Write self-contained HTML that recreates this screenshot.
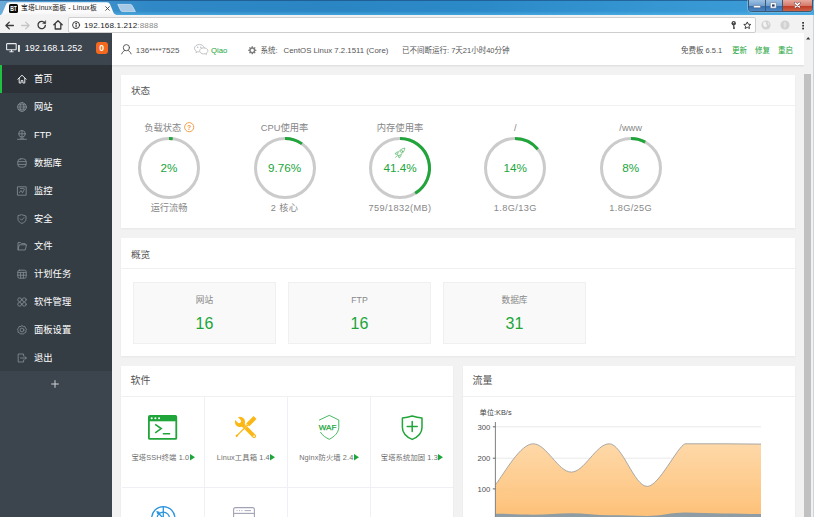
<!DOCTYPE html>
<html lang="zh-CN">
<head>
<meta charset="utf-8">
<title>宝塔Linux面板 - Linux板</title>
<style>
*{box-sizing:border-box;margin:0;padding:0}
html,body{width:814px;height:517px;overflow:hidden;background:#f2f2f2}
body{font-family:"Liberation Sans","Noto Sans CJK SC",sans-serif;font-size:9px;color:#666;position:relative}
.abs{position:absolute}
svg{display:block;overflow:visible}
/* ---------- browser chrome ---------- */
#titlebar{left:0;top:0;width:814px;height:15px;background:linear-gradient(90deg,#6dabd9 0,#4e9bd2 5%,#3089c6 18%,#2b85c3 40%,#2c8ac8 60%,#3596d2 80%,#3d9dd8 100%)}
#titleglow{left:0;top:10.500px;width:814px;height:4.500px;background:linear-gradient(rgba(90,190,240,0),rgba(90,190,240,.55))}
#tab{left:0;top:1.600px;width:121px;height:13.400px}
#tabtxt{left:21px;top:2.700px;letter-spacing:.190px;font-size:6.800px;color:#222;white-space:nowrap;line-height:10px}
#favicon{left:9.200px;top:3.700px;width:9.200px;height:9.200px;background:#0c0c0c;border-radius:1.600px;color:#fff;font-size:6.600px;font-weight:bold;line-height:9.400px;text-align:center;overflow:hidden}
#favicon b{display:block;transform:scaleX(.760);transform-origin:50% 50%;margin:0 -2px}
#toolbar{left:0;top:14.8px;width:814px;height:18.2px;background:#f2f2f2}
#urlbox{left:68px;top:17px;width:688px;height:15.5px;background:#fff;border:1px solid #cfcfcf;border-radius:2px}
#url{left:84px;top:19.500px;letter-spacing:.12px;font-size:8.100px;line-height:12px;color:#222;white-space:nowrap}
#url span{color:#8a8a8a}
.ti{position:absolute;fill:none;stroke:#3a3a3a;stroke-width:1.3;stroke-linecap:round;stroke-linejoin:round}
/* window buttons */
#winbtns{left:747.500px;top:-1px;width:65px;height:12.600px;border:1px solid #3e5670;border-radius:0 0 3.5px 3.5px;overflow:hidden;box-shadow:0 0 0 .6px rgba(255,255,255,.45)}
#winbtns div{position:absolute;top:0;height:11.600px}
#winbtns .a{left:0;width:17px;background:linear-gradient(#9dc0e2 0,#71a0d0 48%,#366eae 52%,#4f8cc8 100%);border-right:1px solid #3e5670}
#winbtns .b{left:17px;width:17px;background:linear-gradient(#9dc0e2 0,#71a0d0 48%,#366eae 52%,#4f8cc8 100%);border-right:1px solid #3e5670}
#winbtns .c{left:34px;width:30px;background:linear-gradient(#e7aa9e 0,#d5796a 48%,#c13b26 52%,#cf6a4c 100%)}
/* ---------- page ---------- */
#side{left:0;top:33px;width:111.600px;height:484px;background:#3c444d}
#sidemenu{left:0;top:65px;width:111.600px;height:306px;background:#353d44}
.mi{position:absolute;left:0;width:111.600px;height:28px;color:#fff;font-size:9.3px;line-height:28px;padding-left:34px;white-space:nowrap}
.mi.on{background:#2c3138;height:27.5px}
.mi.on:before{content:"";position:absolute;left:0;top:0;width:2px;height:100%;background:#22c040}
.mi svg{position:absolute;left:17px;top:9px;width:10px;height:10px;stroke:#838c94;fill:none;stroke-width:.85;stroke-linejoin:round;stroke-linecap:round}
.mi.on svg{stroke:#e4e6e8;stroke-width:1}
#topbar{left:111.600px;top:33px;width:692.400px;height:32px;background:#fff;box-shadow:0 1px 2px rgba(0,0,0,.10)}
#topbar span{position:absolute;top:.500px;line-height:33px;font-size:7.5px;color:#555;white-space:nowrap}
.g{color:#20a53a !important}
.card{position:absolute;background:#fff;box-shadow:0 1px 2px rgba(0,0,0,.05)}
.ct{position:absolute;left:10px;top:.5px;line-height:31px;font-size:9.6px;color:#555}
.cl{position:absolute;left:0;right:0;top:30px;height:1px;background:#f0f0f0}
/* gauges */
.gz{position:absolute;top:46.500px;width:120px;height:100px;text-align:center}
.gz .t{position:absolute;left:0;right:0;top:.8px;font-size:9.3px;line-height:12px;color:#878787;white-space:nowrap}
.gz .b{position:absolute;left:0;right:0;top:81px;font-size:9.2px;line-height:12px;color:#878787;white-space:nowrap}
.gz>svg{position:absolute;left:28px;top:14.600px;width:64px;height:64px}
.gz .v{position:absolute;left:0;right:0;top:39.600px;font-size:11.700px;line-height:14px;color:#20a53a}
/* overview */
.ov{position:absolute;top:44px;width:143px;height:62px;background:#f9f9f9;border:1px solid #f0f0f0;text-align:center}
.ov .n{position:absolute;left:0;right:0;top:11px;font-size:8.7px;line-height:12px;color:#888}
.ov .k{position:absolute;left:0;right:0;top:31px;font-size:16px;line-height:20px;color:#20a53a}
/* software */
.sw{position:absolute;top:31px;width:83px;height:91px;border-right:1px solid #efeff6;border-bottom:1px solid #efeff6}
.sw .l{position:absolute;left:0;right:0;top:56px;text-align:center;font-size:7.300px;line-height:10px;color:#707070;white-space:nowrap;letter-spacing:.120px}
.sw .l .tri{position:static;display:inline-block;width:5px;height:6.400px;vertical-align:-1.100px;margin-left:.400px}
.ct2{top:-.800px !important;left:9.400px !important;font-size:10px !important}
.sw svg{position:absolute;margin-top:.400px}
/* scrollbar */
#sbtrack{left:804px;top:33px;width:8.6px;height:484px;background:#f1f1f1}
#sbthumb{left:804px;top:73.9px;width:7.3px;height:444px;background:#c1c1c1}
#re1{left:812.6px;top:14.6px;width:1.4px;height:503px;background:#cbd5de}
#re2{display:none}
</style>
</head>
<body>
<!-- browser chrome -->
<div id="titlebar" class="abs"></div>
<div id="titleglow" class="abs"></div>
<div class="abs" style="left:0;top:0;width:814px;height:.700px;background:rgba(25,70,120,.600)"></div>
<svg id="tab" class="abs" viewBox="0 0 120 13"><defs><linearGradient id="tg" x1="0" y1="0" x2="0" y2="1"><stop offset="0" stop-color="#fdfdfd"/><stop offset=".8" stop-color="#fafafa"/><stop offset="1" stop-color="#f2f2f2"/></linearGradient></defs><path d="M0 13C1.200 12.600 2 11.800 2.600 10.200L6 2.200C6.600 .700 7.500 0 9 0H106C107.600 0 108.500 .800 109.200 2.400L112.400 10C113.400 12.200 115 13 120 13Z" fill="url(#tg)"/></svg>
<svg class="abs" style="left:117px;top:4.2px;width:19px;height:8px" viewBox="0 0 19 8"><path d="M.8.4H13.2C14.2.4 14.8.9 15.3 1.9L18.4 7.6H5.6C4.6 7.6 4 7.1 3.5 6.1Z" fill="#a7c9e6" stroke="#dcebf7" stroke-width=".7"/></svg>
<div id="favicon" class="abs"><b>BT</b></div>
<div id="tabtxt" class="abs">宝塔Linux面板 - Linux板</div>
<svg class="abs" style="left:104.6px;top:6px;width:5px;height:5px" viewBox="0 0 5 5"><path d="M.4.4 4.6 4.6M4.6.4.4 4.6" stroke="#444" stroke-width=".9" fill="none"/></svg>
<div id="winbtns" class="abs"><div class="a"></div><div class="b"></div><div class="c"></div></div>
<svg class="abs" style="left:747px;top:0;width:66px;height:11px" viewBox="0 0 66 11">
<rect x="6.6" y="5.4" width="7" height="2.4" rx=".8" fill="#fff" stroke="#4a5d75" stroke-width=".5"/>
<rect x="23.3" y="2.6" width="6" height="5.6" rx=".8" fill="#fff" stroke="#4a5d75" stroke-width=".5"/><rect x="25" y="4.4" width="2.6" height="2.2" fill="#27406a"/>
<path d="M48.300 3.200 52.400 7M52.400 3.200 48.300 7" stroke="#6a3a36" stroke-width="2.500" stroke-linecap="round"/><path d="M48.300 3.200 52.400 7M52.400 3.200 48.300 7" stroke="#fff" stroke-width="1.600" stroke-linecap="round"/>
</svg>
<div id="toolbar" class="abs"></div>
<div id="urlbox" class="abs"></div>
<div id="url" class="abs">192.168.1.212<span>:8888</span></div>
<!-- nav icons -->
<svg class="ti" style="left:5px;top:20.5px;width:9px;height:9px" viewBox="0 0 9 9"><path d="M8.4 4.5H1M4.3 1.1.9 4.5 4.3 7.9"/></svg>
<svg class="ti" style="left:21px;top:20.5px;width:9px;height:9px;stroke:#c6c6c6" viewBox="0 0 9 9"><path d="M.6 4.5H8M4.7 1.1 8.1 4.5 4.7 7.9"/></svg>
<svg class="ti" style="left:37px;top:20.3px;width:9.4px;height:9.4px" viewBox="0 0 9.4 9.4"><path d="M7.9 3.1A3.7 3.7 0 1 0 8.4 5.4"/><path d="M8.7.8V3.6H5.9Z" fill="#3a3a3a" stroke-width=".4"/></svg>
<svg class="ti" style="left:53px;top:20.3px;width:10px;height:9.6px" viewBox="0 0 10 9.6"><path d="M.8 4.8 5 .8 9.2 4.8M2.2 4V9H7.8V4"/></svg>
<svg class="ti" style="left:72px;top:21px;width:8.2px;height:8.2px;stroke-width:1" viewBox="0 0 8.2 8.2"><circle cx="4.1" cy="4.1" r="3.5"/><path d="M4.1 3.8V6" stroke-width="1.1"/><circle cx="4.1" cy="2.4" r=".35" fill="#3a3a3a"/></svg>
<!-- right toolbar icons -->
<svg class="abs" style="left:730.5px;top:20.8px;width:5.4px;height:8.4px" viewBox="0 0 5.4 8.4"><circle cx="2.7" cy="2.3" r="2.2" fill="#444"/><path d="M2.7 4V8M2.7 6.2H4M2.7 7.6H3.8" stroke="#444" stroke-width="1" fill="none"/><circle cx="2.7" cy="1.7" r=".6" fill="#fff"/></svg>
<svg class="abs" style="left:743.4px;top:20.6px;width:8.6px;height:8.6px" viewBox="0 0 24 24"><path d="M12 2.6 14.9 9 21.8 9.7 16.6 14.3 18.1 21.1 12 17.6 5.9 21.1 7.4 14.3 2.2 9.7 9.1 9Z" fill="none" stroke="#333" stroke-width="2.6" stroke-linejoin="round"/></svg>
<svg class="abs" style="left:761px;top:20px;width:10px;height:10px" viewBox="0 0 10 10"><circle cx="5" cy="5" r="4.600" fill="#d4d4d4"/><path d="M2.4 2.2C3.8 1.4 5.4 2 5 3.4 4.6 4.6 6.4 4.4 6 5.8 5.6 7 4 7.6 3.2 6.6 2.4 5.6 1.6 4 2.4 2.2Z" fill="#f4f4f4"/><path d="M6.6 2C7.8 2.6 8.4 3.8 8.2 5L7 4.2Z" fill="#ededed"/></svg>
<svg class="abs" style="left:780px;top:20px;width:10px;height:10px" viewBox="0 0 10 10"><circle cx="5" cy="5" r="4.600" fill="#d2d2d2"/><path d="M5 1.6C6.2 2.8 6.8 4.4 6 6.2 5.6 7.2 4.8 7.8 4 8 4.6 6.6 3.6 5.6 3.6 4.2 3.6 3 4.2 2.2 5 1.6Z" fill="#e2e2e2"/></svg>
<svg class="abs" style="left:801.600px;top:22px;width:2.200px;height:7.400px" viewBox="0 0 2.2 7.4"><rect x=".2" y="0" width="1.8" height="1.7" fill="#333"/><rect x=".2" y="2.85" width="1.8" height="1.7" fill="#333"/><rect x=".2" y="5.7" width="1.8" height="1.7" fill="#333"/></svg>
<div id="re1" class="abs"></div><div id="re2" class="abs"></div>

<!-- sidebar -->
<div id="side" class="abs"></div>
<svg class="abs" style="left:6px;top:43.4px;width:14.4px;height:9.4px" viewBox="0 0 14.4 9.4" fill="none" stroke="#e9ecef" stroke-width="1.1"><rect x=".6" y=".6" width="9.6" height="6.2" rx=".6"/><path d="M3.4 8.8H7.6M5.5 6.8V8.6" /><rect x="12" y="2" width="1.9" height="6.8" fill="#e9ecef" stroke="none"/></svg>
<span class="abs" style="left:24.800px;top:33px;line-height:30px;font-size:9px;color:#fff;white-space:nowrap">192.168.1.252</span>
<span class="abs" style="left:95.5px;top:42px;width:12.4px;height:12px;border-radius:3px;background:#f5691f;color:#fff;font-size:8.6px;font-weight:bold;line-height:12.4px;text-align:center">0</span>
<div id="sidemenu" class="abs">
  <div class="mi on" style="top:0.00px"><svg viewBox="0 0 10 10"><path d="M.8 5.2 5 1.2 9.2 5.2M2.2 4.4V9H4.1V6.6H5.9V9H7.8V4.4"/></svg>首页</div>
  <div class="mi" style="top:27.90px"><svg viewBox="0 0 10 10"><circle cx="5" cy="5" r="4.4"/><ellipse cx="5" cy="5" rx="2" ry="4.4"/><path d="M.6 5H9.4M1.3 2.8H8.7M1.3 7.2H8.7"/></svg>网站</div>
  <div class="mi" style="top:55.80px"><svg viewBox="0 0 10 10"><circle cx="5" cy="3.8" r="3.3"/><path d="M1.7 3.8H8.3M5 .5V7.1M.5 9.3H9.5M3.3 8.2H6.7"/></svg>FTP</div>
  <div class="mi" style="top:83.70px"><svg viewBox="0 0 10 10"><rect x=".8" y=".8" width="8.4" height="8.4" rx="3"/><path d="M1 3.6H9M1 6.4H9"/></svg>数据库</div>
  <div class="mi" style="top:111.60px"><svg viewBox="0 0 10 10"><rect x=".8" y=".8" width="8.4" height="8.4"/><path d="M2.5 6.5 4 4.5 5.5 6.8 7.5 3M3.5 2.4H6.5"/></svg>监控</div>
  <div class="mi" style="top:139.50px"><svg viewBox="0 0 10 10"><path d="M5 .8 9 2V5.2C9 7.2 7.2 8.6 5 9.4 2.8 8.6 1 7.2 1 5.2V2Z"/><path d="M3.2 4.8 4.6 6.2 7 3.6"/></svg>安全</div>
  <div class="mi" style="top:167.40px"><svg viewBox="0 0 10 10"><path d="M1 8.6V1.6H3.6L4.5 2.6H8.2V3.8M1 8.6 2.3 3.8H9.6L8.3 8.6Z"/></svg>文件</div>
  <div class="mi" style="top:195.30px"><svg viewBox="0 0 10 10"><rect x=".8" y="1.2" width="8.4" height="8" rx="1.6"/><path d="M.8 3.4H9.2M3.6 3.4V9M6.4 3.4V9M.8 6.2H9.2"/></svg>计划任务</div>
  <div class="mi" style="top:223.20px"><svg viewBox="0 0 10 10"><circle cx="2.7" cy="2.7" r="1.9"/><circle cx="7.3" cy="2.7" r="1.9"/><circle cx="2.7" cy="7.3" r="1.9"/><circle cx="7.3" cy="7.3" r="1.9"/></svg>软件管理</div>
  <div class="mi" style="top:251.10px"><svg viewBox="0 0 10 10"><path d="M5 .6 6.3 1.5 7.9 1.5 8.4 3 9.5 4.2 8.9 5.6 9 7.2 7.5 7.8 6.5 9.1 5 8.7 3.5 9.1 2.5 7.8 1 7.2 1.1 5.6.5 4.2 1.6 3 2.1 1.5 3.7 1.5Z"/><circle cx="5" cy="5" r="1.9"/></svg>面板设置</div>
  <div class="mi" style="top:279.00px"><svg viewBox="0 0 10 10"><path d="M6.6 3V1H1.2V9H6.6V7M3.6 5H9.3M7.8 3.6 9.3 5 7.8 6.4"/></svg>退出</div>
</div>
<svg class="abs" style="left:50.6px;top:380px;width:8px;height:8px" viewBox="0 0 8 8"><path d="M4 .2V7.8M.2 4H7.8" stroke="#cfd3d6" stroke-width="1" fill="none"/></svg>

<!-- top bar -->
<div id="topbar" class="abs">
  <svg class="abs" style="left:9.8px;top:11.4px;width:10.8px;height:10.4px" viewBox="0 0 10.8 10.4" fill="none" stroke="#555" stroke-width=".95" stroke-linecap="round"><circle cx="5.4" cy="3.7" r="3.1"/><path d="M.7 9.9C1.4 8 2.6 7 3.6 6.5M10.1 9.9C9.4 8 8.2 7 7.2 6.5"/></svg>
  <span style="left:24.2px;font-size:8px">136****7525</span>
  <svg class="abs" style="left:82.4px;top:11.2px;width:14.6px;height:10.4px" viewBox="0 0 14.6 10.4" fill="none" stroke="#aeb4b8" stroke-width=".8"><path d="M5.4.5C2.7.5.5 2.2.5 4.3.5 5.5 1.2 6.5 2.3 7.2L1.9 8.6 3.5 7.8C4 7.9 4.5 8 5 8"/><path d="M5.4.5C7.9.5 10 2 10.3 3.9"/><path d="M9.7 3.9C7.4 3.9 5.6 5.2 5.6 6.9 5.6 8.6 7.4 9.9 9.7 9.9 10.2 9.9 10.6 9.8 11 9.7L12.5 10.4 12.2 9.2C13.2 8.7 13.9 7.8 13.9 6.9 13.9 5.2 12 3.9 9.7 3.9Z"/><circle cx="3.8" cy="3.2" r=".35" fill="#aeb4b8"/><circle cx="6.9" cy="3.2" r=".35" fill="#aeb4b8"/></svg>
  <span style="left:99.4px;font-size:7.700px" class="g">Qiao</span>
  <svg class="abs" style="left:136.800px;top:12.500px;width:8.600px;height:8.600px" viewBox="0 0 24 24"><path fill="#7d7d7d" fill-rule="evenodd" d="M10.3 1.5H13.7L14.3 4.6 16.2 5.4 18.8 3.6 21.2 6 19.4 8.6 20.2 10.5 23.3 11.1V14.5L20.2 15.1 19.4 17 21.2 19.6 18.8 22 16.2 20.2 14.3 21 13.7 24.1H10.3L9.7 21 7.8 20.2 5.2 22 2.8 19.6 4.6 17 3.8 15.1.7 14.5V11.1L3.8 10.5 4.6 8.6 2.8 6 5.2 3.6 7.8 5.4 9.7 4.6ZM12 8.3A4.5 4.5 0 1 0 12 17.3 4.5 4.5 0 1 0 12 8.3Z" transform="translate(0,-.8)"/></svg>
  <span style="left:149.0px">系统:</span>
  <span style="left:172.0px;font-size:7.800px">CentOS Linux 7.2.1511 (Core)</span>
  <span style="left:290.4px">已不间断运行: 7天21小时40分钟</span>
  <span style="left:569.4px">免费板 6.5.1</span>
  <span style="left:620.4px" class="g">更新</span>
  <span style="left:643.4px" class="g">修复</span>
  <span style="left:666.4px" class="g">重启</span>
</div>

<!-- status card -->
<div class="card" style="left:121px;top:74.500px;width:673.700px;height:153.900px">
  <div class="ct">状态</div><div class="cl" style="top:30.5px"></div>
  <div class="gz" style="left:-12px"><div class="t" style="left:-12.5px">负载状态</div><svg viewBox="0 0 64 64"><circle cx="32" cy="32" r="29.5" fill="none" stroke="#cbcbcb" stroke-width="3"/><path d="M32 2.5 A29.5 29.5 0 0 1 35.70 2.73" fill="none" stroke="#20a53a" stroke-width="3"/></svg><svg class="abs" style="left:75px;top:1.300px;width:10.400px;height:10.400px" viewBox="0 0 10 10"><circle cx="5" cy="5" r="4.4" fill="none" stroke="#f2993f" stroke-width=".9"/><text x="5" y="7.4" font-size="6.6" text-anchor="middle" fill="#f2993f" font-family="Liberation Sans,sans-serif" font-weight="bold">?</text></svg><div class="v">2%</div><div class="b">运行流畅</div></div>
  <div class="gz" style="left:103.6px"><div class="t">CPU使用率</div><svg viewBox="0 0 64 64"><circle cx="32" cy="32" r="29.5" fill="none" stroke="#cbcbcb" stroke-width="3"/><path d="M32 2.5 A29.5 29.5 0 0 1 48.98 7.88" fill="none" stroke="#20a53a" stroke-width="3"/></svg><div class="v">9.76%</div><div class="b" style="letter-spacing:.380px">2 核心</div></div>
  <div class="gz" style="left:219px"><div class="t">内存使用率</div><svg viewBox="0 0 64 64"><circle cx="32" cy="32" r="29.5" fill="none" stroke="#cbcbcb" stroke-width="3"/><path d="M32 2.5 A29.5 29.5 0 0 1 47.18 57.30" fill="none" stroke="#20a53a" stroke-width="3"/></svg><svg class="abs" style="left:54px;top:25.5px;width:12px;height:12px" viewBox="0 0 12 12" fill="none" stroke="#55b868" stroke-width=".7" stroke-linejoin="round" stroke-linecap="round"><path d="M4.2 8.9C3.8 8.6 3.3 8.1 3.1 7.7 4.2 4.4 6.9 1.6 10.9 1 10.4 5 7.6 7.8 4.2 8.9Z"/><circle cx="7.6" cy="4.4" r="1.1"/><path d="M4.4 4.9 2.2 5.3 1 7 3.1 7.1M7.1 7.6 6.7 9.8 5 11 4.9 8.9M3 8.8 1.6 10.4"/></svg><div class="v">41.4%</div><div class="b" style="letter-spacing:.380px">759/1832(MB)</div></div>
  <div class="gz" style="left:334.3px"><div class="t">/</div><svg viewBox="0 0 64 64"><circle cx="32" cy="32" r="29.5" fill="none" stroke="#cbcbcb" stroke-width="3"/><path d="M32 2.5 A29.5 29.5 0 0 1 54.73 13.20" fill="none" stroke="#20a53a" stroke-width="3"/></svg><div class="v">14%</div><div class="b" style="letter-spacing:.380px">1.8G/13G</div></div>
  <div class="gz" style="left:449.7px"><div class="t">/www</div><svg viewBox="0 0 64 64"><circle cx="32" cy="32" r="29.5" fill="none" stroke="#cbcbcb" stroke-width="3"/><path d="M32 2.5 A29.5 29.5 0 0 1 46.21 6.15" fill="none" stroke="#20a53a" stroke-width="3"/></svg><div class="v">8%</div><div class="b" style="letter-spacing:.380px">1.8G/25G</div></div>
</div>

<!-- overview card -->
<div class="card" style="left:121px;top:238.400px;width:673.700px;height:117.600px">
  <div class="ct">概览</div><div class="cl"></div>
  <div class="ov" style="left:12px"><div class="n">网站</div><div class="k">16</div></div>
  <div class="ov" style="left:167px"><div class="n">FTP</div><div class="k">16</div></div>
  <div class="ov" style="left:322px"><div class="n">数据库</div><div class="k">31</div></div>
</div>

<!-- software card -->
<div class="card" style="left:121px;top:365.600px;width:332px;height:152px;overflow:hidden">
  <div class="ct ct2">软件</div><div class="cl"></div>
  <div class="sw" style="left:1px">
    <svg style="left:26.300px;top:18px;width:29.200px;height:24.800px" viewBox="0 0 29.200 24.800"><rect x=".900" y=".900" width="27.400" height="23" rx="1" fill="#fff" stroke="#20a53a" stroke-width="1.800"/><rect x=".900" y=".900" width="27.400" height="5.400" fill="#20a53a"/><circle cx="3.700" cy="3.300" r="1.050" fill="#fff"/><circle cx="7.400" cy="3.300" r="1.050" fill="#fff"/><circle cx="11.100" cy="3.300" r="1.050" fill="#fff"/><path d="M7.200 9.400 13.200 13.600 7.200 17.900M14.800 18.800H22.200" fill="none" stroke="#20a53a" stroke-width="1.600"/></svg>
    <div class="l">宝塔SSH终端 1.0<svg class="tri" viewBox="0 0 5 6.400"><path d="M0 0 5 3.200 0 6.400Z" fill="#20a53a"/></svg></div></div>
  <div class="sw" style="left:84px">
    <svg style="left:21px;top:11px;width:40px;height:40px" viewBox="0 0 40 40" fill="#fcb715">
      <g transform="translate(13.930 13.930) rotate(-45)"><path d="M-2 -4.750A5.150 5.150 0 1 0 2 -4.750V-1.200A2 2 0 0 1 -2 -1.200Z"/><rect x="-1.950" y="3.600" width="3.900" height="18.400" rx="1.950"/><circle cx="0" cy="20" r=".850" fill="#fff"/></g>
      <g transform="translate(19.700 18.900) rotate(45)" stroke="#fff" stroke-width=".5" paint-order="stroke"><rect x="-2.100" y="-13.300" width="4.200" height="10.700" rx=".500"/><path d="M-1.300 -2.800H1.300L.700 -1H-.700Z"/><path d="M-.650 -1.200H.650V10.600L1.150 12.200 .900 13.700H-.900L-1.150 12.200 -.650 10.600Z"/></g>
    </svg>
    <div class="l">Linux工具箱 1.4<svg class="tri" viewBox="0 0 5 6.400"><path d="M0 0 5 3.200 0 6.400Z" fill="#20a53a"/></svg></div></div>
  <div class="sw" style="left:167px">
    <svg style="left:21px;top:11px;width:40px;height:40px" viewBox="0 0 40 40"><path d="M10.400 12 20.300 7.350 29.800 12V19.500C29.600 24.500 25.500 28.600 20.300 31.300 17 29.800 13.400 27.600 11.600 24.400" fill="none" stroke="#3db556" stroke-width=".950" stroke-linejoin="round" stroke-linecap="round"/><text x="18.600" y="21.650" font-size="8" fill="#20a53a" stroke="#20a53a" stroke-width=".250" text-anchor="middle" font-family="Liberation Sans,sans-serif">WAF</text></svg>
    <div class="l">Nginx防火墙 2.4<svg class="tri" viewBox="0 0 5 6.400"><path d="M0 0 5 3.200 0 6.400Z" fill="#20a53a"/></svg></div></div>
  <div class="sw" style="left:250px;border-right:0;width:82px">
    <svg style="left:30px;top:17.800px;width:22.400px;height:25.400px" viewBox="0 0 22.400 25.400"><path d="M1.400 3C5 2.700 8.400 1.900 11.200 1 14 1.900 17.400 2.700 21 3V12.400C21 18 17 21.800 11.200 24.400 5.400 21.800 1.400 18 1.400 12.400Z" fill="none" stroke="#20a53a" stroke-width="1.500" stroke-linejoin="round"/><path d="M11.200 6.400V16.600M6.200 11.500H16.200" stroke="#20a53a" stroke-width="1.500" stroke-linecap="round" fill="none"/></svg>
    <div class="l">宝塔系统加固 1.3<svg class="tri" viewBox="0 0 5 6.400"><path d="M0 0 5 3.200 0 6.400Z" fill="#20a53a"/></svg></div></div>
  <div class="sw" style="left:1px;top:122px">
    <svg style="left:28.700px;top:17.900px;width:24.600px;height:24.600px" viewBox="0 0 24.600 24.600" fill="none" stroke="#2a95de" stroke-width="1.300"><circle cx="12.300" cy="12.300" r="11.650"/><circle cx="12.300" cy="12.300" r="6.200"/><path d="M12.300 .800V12.300L5.600 5.200"/><circle cx="7.400" cy="7" r="1.400" fill="#2a95de" stroke="none"/></svg></div>
  <div class="sw" style="left:84px;top:122px">
    <svg style="left:28.400px;top:18.800px;width:22px;height:18px" viewBox="0 0 22 18" fill="none" stroke="#a2a2b6" stroke-width="1.100"><rect x=".600" y=".600" width="20.800" height="16.800" rx="2"/><path d="M.600 6.400H21.400"/><path d="M3.600 3.600H4.600M6 3.600H7M8.400 3.600H9.400M11.600 3.600H18" stroke-width=".900"/></svg></div>
  <div class="sw" style="left:167px;top:122px"></div>
</div>

<!-- traffic card -->
<div class="card" style="left:463px;top:365.600px;width:331.700px;height:152px;overflow:hidden">
  <svg class="abs" style="left:0;top:.400px;width:332px;height:151px" viewBox="0 0 332 151">
<defs><linearGradient id="og" x1="0" y1="0" x2="0" y2="1"><stop offset="0" stop-color="#fed6a3"/><stop offset="1" stop-color="#fdba69"/></linearGradient></defs>
<text x="16.5" y="49" font-size="7.3" fill="#444" font-family="Liberation Sans,Noto Sans CJK SC,sans-serif">单位:KB/s</text>
<path d="M32.4 60.8H298M32.4 92.2H298M32.4 122.9H298" stroke="#e9e9e9" stroke-width="1" fill="none"/>
<path d="M32.4 118.9 C42.4 105.7 57.3 77.8 70.3 77.8 C83.4 77.8 95.2 106.1 108.3 106.1 C121.4 106.1 133.1 77.8 146.2 77.8 C159.3 77.8 171.1 120.4 184.2 120.4 C196.0 120.4 214.1 80.8 222.1 77.8 L260.1 77.8 L298.0 78.1 L298.0 160 L32.4 160 Z" fill="url(#og)" opacity=".94"/>
<path d="M32.4 118.9 C42.4 105.7 57.3 77.8 70.3 77.8 C83.4 77.8 95.2 106.1 108.3 106.1 C121.4 106.1 133.1 77.8 146.2 77.8 C159.3 77.8 171.1 120.4 184.2 120.4 C196.0 120.4 214.1 80.8 222.1 77.8 L260.1 77.8 L298.0 78.1" fill="none" stroke="#a0a0a0" stroke-width=".9"/>
<path d="M32.4 147.8 C45.5 147.8 57.3 148.7 70.3 148.7 C83.4 148.7 95.2 147.2 108.3 147.2 C121.4 147.2 133.1 149.3 146.2 149.3 C159.3 149.3 171.1 150.0 184.2 150.0 C197.3 150.0 209.0 146.5 222.1 146.5 C235.2 146.5 247.0 147.5 260.1 147.5 C273.1 147.5 284.9 148.1 298.0 148.1 L298.0 160 L32.4 160 Z" fill="#8d9ca5"/>
<path d="M32.4 56V151" stroke="#858585" stroke-width="1.050" fill="none"/>
<path d="M29.8 60.8H32.4M29.8 92.2H32.4M29.8 122.9H32.4" stroke="#666" stroke-width="1" fill="none"/>
<g font-size="7.700" fill="#505050" text-anchor="end" font-family="Liberation Sans,sans-serif"><text x="27.4" y="63.6">300</text><text x="27.4" y="95">200</text><text x="27.4" y="125.7">100</text></g>
</svg>
  <div class="ct ct2">流量</div><div class="cl"></div>
</div>

<!-- scrollbar -->
<div id="sbtrack" class="abs"></div>
<div id="sbthumb" class="abs"></div>
<svg class="abs" style="left:805.600px;top:37.200px;width:4.400px;height:2.500px" viewBox="0 0 5 3"><path d="M0 3 2.500 0 5 3Z" fill="#333"/></svg>
</body>
</html>
